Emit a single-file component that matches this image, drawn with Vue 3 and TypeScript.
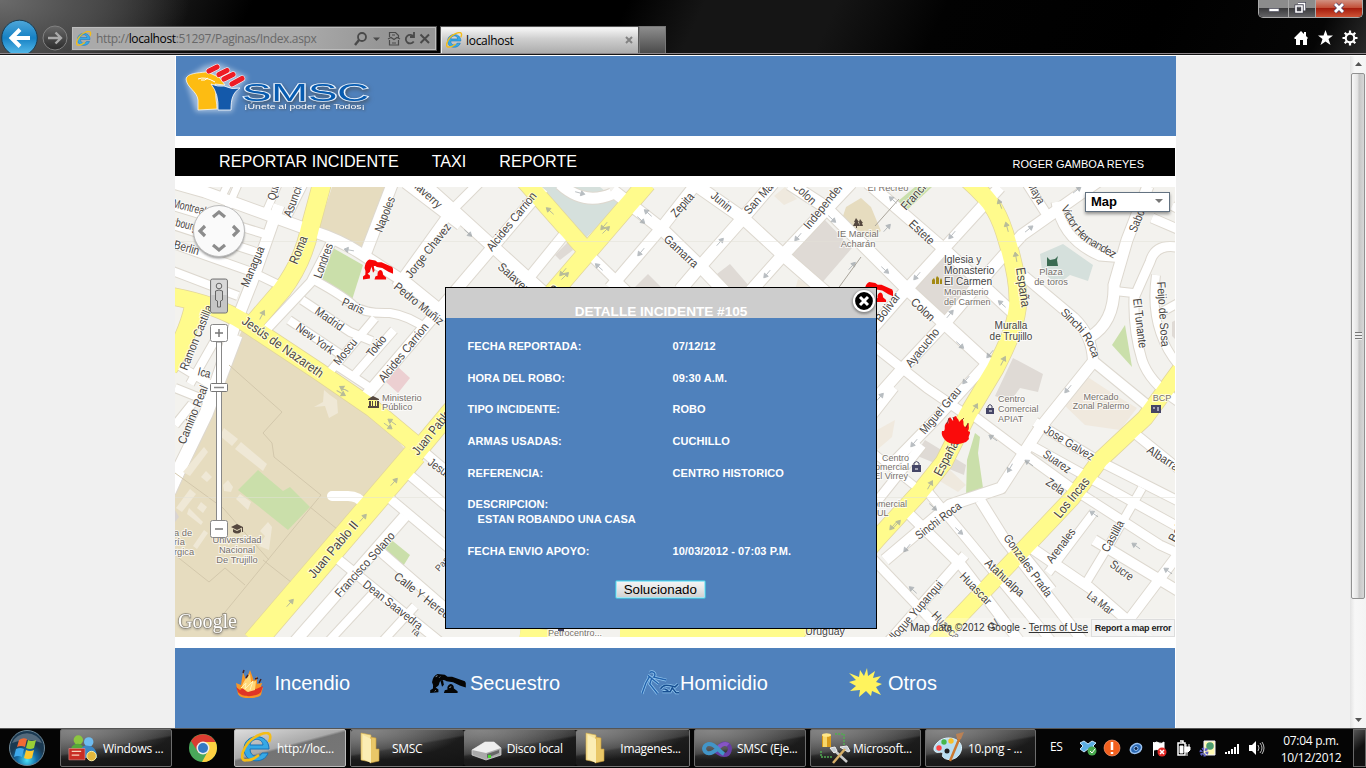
<script setup lang="ts">
type Road = { d: string; w: number }
type Label = { t: string; x: number; y: number; r: number; len?: number; s?: number }
type Place = { t: string; x: number; y: number; s?: number; a?: 'start' | 'middle' | 'end'; c?: string }
type Area = { p: string; c: string }

const areas: Area[] = [
  { p: '332,187 386,187 364,250 318,230', c: '#e6dcbf' },
  { p: '244,326 300,362 363,403 406,450 330,540 250,637 175,637 175,482 208,425 222,372', c: '#e6dcbf' },
  { p: '333,248 363,265 352,300 322,280', c: '#cadfaa' },
  { p: '398,367 410,378 398,393 386,382', c: '#eccfd1' },
  { p: '543,187 543,196 583,241 620,203 600,187', c: '#d5e0dc' },
  { p: '568,242 573,250 560,260 555,255', c: '#dfdad5' },
  { p: '632,290 648,274 664,290', c: '#dfdad5' },
  { p: '717,274 730,264 750,287 725,290', c: '#dfdad5' },
  { p: '822,217 852,248 820,285 792,255', c: '#dfdad5' },
  { p: '861,198 871,207 881,231 869,238 842,219 846,207', c: '#e6dcbf' },
  { p: '785,187 797,199 784,205 774,196', c: '#efe9de' },
  { p: '798,279 812,287 795,290', c: '#efe9de' },
  { p: '915,187 932,187 906,211 897,202', c: '#cadfaa' },
  { p: '943,256 973,289 942,318 913,290', c: '#dfdad5' },
  { p: '1063,244 1093,265 1088,281 1070,275 1057,285 1042,271 1040,254', c: '#d5e0dc' },
  { p: '1125,325 1132,367 1112,345', c: '#cadfaa' },
  { p: '1013,358 1043,374 1038,392 1020,388 1010,402 995,396', c: '#dfdad5' },
  { p: '975,433 980,437 978,453 983,488 966,496 967,460', c: '#cadfaa' },
  { p: '925,440 966,465 964,475 915,455', c: '#dfdad5' },
  { p: '950,470 966,485 958,492 938,480', c: '#efe9de' },
  { p: '1080,372 1115,395 1137,408 1120,430 1085,425 1062,403', c: '#f0e9de' },
  { p: '877,430 895,420 892,437 877,450', c: '#f0e9de' },
  { p: '1172,322 1176,320 1176,340 1172,336', c: '#dfdad5' },
  { p: '175,510 179,517 175,522', c: '#d9d4d2' },
  { p: '383,537 389,538 410,555 402,568 382,553', c: '#cadfaa' },
]

const campus: Area[] = [
  { p: '258,470 283,491 290,487 310,507 288,530 238,490', c: '#cadfaa' },
  { p: '224,428 238,439 232,446 220,436', c: '#efe8d6' },
  { p: '241,442 267,464 263,471 235,449', c: '#efe8d6' },
  { p: '204,447 208,452 190,476 183,472', c: '#efe8d6' },
  { p: '206,471 212,477 207,482 201,477', c: '#efe8d6' },
  { p: '190,489 196,494 182,512 176,508', c: '#efe8d6' },
  { p: '201,502 207,507 203,513 197,508', c: '#efe8d6' },
  { p: '189,508 203,522 201,525 187,514', c: '#efe8d6' },
  { p: '228,480 233,487 231,492 224,491 223,485', c: '#efe8d6' },
  { p: '240,494 251,502 248,510 236,499', c: '#efe8d6' },
  { p: '268,522 272,527 269,550 259,546 265,536 260,531', c: '#efe8d6' },
  { p: '204,530 208,533 197,549 193,546', c: '#efe8d6' },
  { p: '324,390 330,395 337,400 338,413 329,418 325,406 314,407 323,402', c: '#efe8d6' },
]

const major: Road[] = [
  { d: 'M323 180 L310 228 Q303 262 282 290 L252 325', w: 18 },
  { d: 'M170 296 Q215 304 244 322 L318 371 L372 408 L414 443', w: 17 },
  { d: 'M194 308 Q188 335 168 368', w: 19 },
  { d: 'M254 642 L415 454', w: 23 },
  { d: 'M415 454 L450 412 L647 183', w: 18 },
  { d: 'M524 180 L583 247', w: 17 },
  { d: 'M968 180 C994 203 1000 215 1008 244 C1025 300 1020 320 995 369 L968 414 L944 462 L920 492 L877 539 L790 640', w: 17 },
  { d: 'M1180 370 L1145 418 L1100 460 L1072 498 L1020 553 L935 642', w: 16 },
  { d: 'M520 634 L550 638 M620 633 L800 634', w: 15 },
]

const minor: Road[] = [
  { d: 'M170 182 L205 192 L315 232 Q340 240 360 253 L408 284 L455 322', w: 11 },
  { d: 'M170 205 L268 235', w: 8 },
  { d: 'M170 224 L262 254', w: 8 },
  { d: 'M170 243 L252 272 L281 286', w: 8 },
  { d: 'M170 270 L238 296', w: 8 },
  { d: 'M279 205 L252 282 L235 325 L206 412 L170 492', w: 11 },
  { d: 'M236 335 L206 414 L168 492', w: 13 },
  { d: 'M226 212 L240 180 M266 212 L280 180 M288 216 L306 180 M220 200 L230 180', w: 7 },
  { d: 'M393 182 L365 255', w: 11 },
  { d: 'M480 182 L450 212 L396 287', w: 9 },
  { d: 'M405 184 L460 226', w: 8 },
  { d: 'M331 243 L311 282 L262 334', w: 9 },
  { d: 'M316 281 Q345 297 354 306 Q366 314 390 313 Q410 316 428 330 M302 300 L350 332 L372 341 M289 320 L340 354', w: 8 },
  { d: 'M375 318 L328 374 M394 330 L352 378 M334 364 L375 391', w: 8 },
  { d: 'M543 188 L365 397', w: 11 },
  { d: 'M425 185 L455 212 L545 294', w: 12 },
  { d: 'M563 236 L515 295', w: 10 },
  { d: 'M560 184 Q584 206 612 194', w: 11 },
  { d: 'M612 190 L663 230 L700 266 L725 292', w: 12 },
  { d: 'M696 184 L663 226 L610 288', w: 11 },
  { d: 'M585 250 L630 294', w: 9 },
  { d: 'M693 183 L743 218 L783 255 L830 296', w: 12 },
  { d: 'M773 183 L743 218 L697 270 L680 290', w: 12 },
  { d: 'M851 183 L783 255 L750 292', w: 12 },
  { d: 'M790 184 L824 206 L907 289 L994 369', w: 12 },
  { d: 'M868 183 L943 248 L1012 312', w: 11 },
  { d: 'M1000 187 L907 289 L866 336', w: 11 },
  { d: 'M1100 180 L1022 235 Q990 270 947 321 L903 368 L870 405', w: 11 },
  { d: 'M870 343 L927 388 L962 412', w: 9 },
  { d: 'M990 360 L935 420 L890 466', w: 10 },
  { d: 'M1026 182 L1047 215 M1056 202 Q1062 240 1100 256 L1125 258', w: 9 },
  { d: 'M1148 186 L1127 240 L1114 285 Q1115 322 1090 337', w: 11 },
  { d: 'M1152 218 L1182 231 M1176 247 Q1155 244 1150 262 L1134 298 Q1133 330 1142 360 Q1150 384 1182 404', w: 9 },
  { d: 'M1115 291 L1133 293 M1172 206 L1182 211 M1156 275 Q1148 330 1180 367 M1160 313 L1180 302', w: 8 },
  { d: 'M1024 276 L1074 318 Q1092 335 1093 361 L1148 406', w: 10 },
  { d: 'M1093 362 L1040 428 L1001 488 L950 505 L885 560', w: 11 },
  { d: 'M966 410 L1023 453 L1070 487 L1160 545 L1182 555', w: 9 },
  { d: 'M1035 422 L1097 460 L1182 503 M1030 445 L1180 528', w: 9 },
  { d: 'M1128 428 L1180 470', w: 9 },
  { d: 'M980 500 L1005 540 L1082 640', w: 10 },
  { d: 'M1142 488 L1112 540 L1083 588 M1094 512 L1048 573', w: 8 },
  { d: 'M1030 547 L1090 588 L1150 640 M1094 540 L1180 592 M1180 552 L1125 625', w: 10 },
  { d: 'M923 486 L972 545 L1052 642', w: 9 },
  { d: 'M903 508 L962 566 L1020 642', w: 10 },
  { d: 'M872 558 L952 642', w: 9 },
  { d: 'M965 555 L888 642 M878 500 L922 445 M1052 590 L1020 550', w: 9 },
  { d: 'M405 516 L292 645', w: 11 },
  { d: 'M334 556 L440 642 M374 546 L450 612', w: 9 },
  { d: 'M388 497 L450 549 M406 472 L450 509 M424 452 L450 474', w: 9 },
  { d: 'M378 588 L328 642 M415 606 L382 642', w: 8 },
  { d: 'M870 450 L922 492 M895 388 L870 420', w: 7 },
  { d: 'M175 425 L192 404 M170 360 L216 388 M222 328 L190 384 M175 388 L210 402', w: 8 },
]

const streets: Label[] = [
  { t: 'Montreal', x: 172, y: 207, r: 14, len: 34 }, { t: 'bourg', x: 175, y: 226, r: 14, len: 22 },
  { t: 'Berlin', x: 173, y: 248, r: 16, len: 26 }, { t: 'Quito', x: 275, y: 201, r: -74, len: 23 },
  { t: 'Asuncion', x: 291, y: 218, r: -70, len: 43 }, { t: 'Managua', x: 248, y: 288, r: -67, len: 43 },
  { t: 'Roma', x: 297, y: 265, r: -68, len: 29, s: 13 }, { t: 'Londres', x: 321, y: 279, r: -70, len: 36 },
  { t: 'Napoles', x: 382, y: 233, r: -69, len: 37 }, { t: 'Jorge Chavez', x: 411, y: 279, r: -52, len: 66 },
  { t: 'Echaverry', x: 402, y: 177, r: 42, len: 48 }, { t: 'Pedro Muñiz', x: 393, y: 288, r: 39, len: 60 },
  { t: 'Paris', x: 341, y: 305, r: 24, len: 23 }, { t: 'Madrid', x: 314, y: 313, r: 35, len: 32 },
  { t: 'New York', x: 295, y: 329, r: 36, len: 44 }, { t: 'Moscu', x: 339, y: 366, r: -51, len: 30 },
  { t: 'Tokio', x: 372, y: 358, r: -51, len: 24 }, { t: 'Alcides Carrion', x: 384, y: 383, r: -51, len: 72 },
  { t: 'Jesús de Nazareth', x: 241, y: 323, r: 35, len: 96, s: 13 }, { t: 'Ica', x: 197, y: 375, r: 14, len: 13 },
  { t: 'Ramon Castilla', x: 187, y: 371, r: -68, len: 69 }, { t: 'Camino Real', x: 185, y: 445, r: -68, len: 62 },
  { t: 'Juan Pablo II', x: 314, y: 579, r: -50, len: 70, s: 13 }, { t: 'Juan Pablo', x: 418, y: 456, r: -51, len: 54, s: 13 },
  { t: 'Jesus', x: 427, y: 464, r: 36, len: 26 }, { t: 'Francisco Solano', x: 340, y: 598, r: -48, len: 83 },
  { t: 'Calle Y Heredia', x: 393, y: 578, r: 38, len: 76 }, { t: 'Dean Saavedra', x: 362, y: 586, r: 38, len: 72 },
  { t: 'Pas', x: 439, y: 572, r: -48, s: 9 }, { t: 'ra', x: 411, y: 632, r: 38, s: 9 },
  { t: 'Alcides Carrion', x: 492, y: 252, r: -51, len: 72 }, { t: 'Salaverry', x: 497, y: 268, r: 42, len: 46 },
  { t: 'Zepita', x: 676, y: 218, r: -48, len: 28 }, { t: 'Gamarra', x: 663, y: 240, r: 43, len: 42 },
  { t: 'Mansiche', x: 524, y: 332, r: -52, len: 56 }, { t: 'Junin', x: 710, y: 197, r: 40, len: 24 },
  { t: 'San Martin', x: 749, y: 215, r: -48, len: 52 }, { t: 'Colon', x: 792, y: 187, r: 43, len: 27 },
  { t: 'Independencia', x: 809, y: 230, r: -51, len: 71 }, { t: 'Francisco', x: 906, y: 211, r: -48, len: 48 },
  { t: 'Estete', x: 908, y: 225, r: 43, len: 30 }, { t: 'Bolivar', x: 881, y: 323, r: -53, len: 33 },
  { t: 'Colon', x: 910, y: 303, r: 43, len: 28 }, { t: 'Ayacucho', x: 911, y: 368, r: -51, len: 46 },
  { t: 'Miguel Grau', x: 925, y: 435, r: -50, len: 57 }, { t: 'España', x: 1016, y: 268, r: 82, len: 40, s: 13 },
  { t: 'Maya', x: 1027, y: 184, r: 62, len: 24 }, { t: 'Saboga', x: 1136, y: 233, r: -67, len: 34 },
  { t: 'El Tunante', x: 1133, y: 299, r: 83, len: 50 }, { t: 'Feijo de Sosa', x: 1157, y: 282, r: 86, len: 65 },
  { t: 'España', x: 941, y: 477, r: -62, len: 38, s: 13 }, { t: 'Sinchi Roca', x: 919, y: 540, r: -37, len: 54 },
  { t: 'Jose Galvez', x: 1043, y: 432, r: 31, len: 56 }, { t: 'Suarez', x: 1042, y: 456, r: 35, len: 31 },
  { t: 'Zela', x: 1045, y: 484, r: 34, len: 20 }, { t: 'Los Incas', x: 1060, y: 519, r: -51, len: 48, s: 13 },
  { t: 'Albarracin', x: 1146, y: 452, r: 33, len: 50 }, { t: 'Gonzales Prada', x: 1003, y: 538, r: 54, len: 74 },
  { t: 'Arenales', x: 1052, y: 564, r: -53, len: 40 }, { t: 'Castilla', x: 1108, y: 553, r: -61, len: 34 },
  { t: 'Sucre', x: 1109, y: 566, r: 36, len: 26 }, { t: 'La Mar', x: 1086, y: 597, r: 37, len: 30 },
  { t: 'Atahualpa', x: 984, y: 564, r: 43, len: 49 }, { t: 'Huascar', x: 959, y: 577, r: 46, len: 40 },
  { t: 'lloque Yupanqui', x: 895, y: 641, r: -49, len: 74 }, { t: 'Huascar', x: 931, y: 616, r: 46, len: 38 },
  { t: 'Bal', x: 1175, y: 543, r: -62 }, { t: 'W', x: 993, y: 632, r: -48 },
]

const places: Place[] = [
  { t: 'Ministerio', x: 382, y: 401 }, { t: 'Público', x: 382, y: 410 },
  { t: 'Universidad', x: 237, y: 543, a: 'middle' }, { t: 'Nacional', x: 237, y: 553, a: 'middle' },
  { t: 'De Trujillo', x: 237, y: 563, a: 'middle' }, { t: 'a de', x: 174, y: 536 }, { t: 'ría', x: 174, y: 545 },
  { t: 'rgica', x: 174, y: 555 }, { t: 'El Recreo', x: 888, y: 191, a: 'middle' },
  { t: 'IE Marcial', x: 858, y: 237, a: 'middle' }, { t: 'Acharán', x: 858, y: 247, a: 'middle' },
  { t: 'Iglesia y', x: 944, y: 263, s: 10.2, c: '#444' }, { t: 'Monasterio', x: 944, y: 274, s: 10.2, c: '#444' },
  { t: 'El Carmen', x: 944, y: 285, s: 10.2, c: '#444' }, { t: 'Monasterio', x: 944, y: 295, s: 9 },
  { t: 'del Carmen', x: 944, y: 305, s: 9 }, { t: 'Muralla', x: 1011, y: 329, s: 10, a: 'middle', c: '#444' },
  { t: 'de Trujillo', x: 1011, y: 340, s: 10, a: 'middle', c: '#444' }, { t: 'Plaza', x: 1051, y: 275, a: 'middle' },
  { t: 'de toros', x: 1051, y: 285, a: 'middle' }, { t: 'Centro', x: 998, y: 402, s: 9 },
  { t: 'Comercial', x: 998, y: 412, s: 9 }, { t: 'APIAT', x: 998, y: 422, s: 9 }, { t: 'Mercado', x: 1101, y: 400, a: 'middle', s: 9 },
  { t: 'Zonal Palermo', x: 1101, y: 409, a: 'middle', s: 8.7 }, { t: 'BCP', x: 1162, y: 401, a: 'middle', s: 9 },
  { t: 'Centro', x: 909, y: 461, a: 'end', s: 9 }, { t: 'Comercial', x: 909, y: 470, a: 'end', s: 9 },
  { t: 'El Virrey', x: 908, y: 479, a: 'end', s: 9 }, { t: 'Comercial', x: 907, y: 507, a: 'end', s: 9 },
  { t: 'UL', x: 877, y: 516, s: 9 }, { t: 'Uruguay', x: 825, y: 635, s: 10.5, a: 'middle', c: '#444' },
  { t: 'Petrocentro...', x: 575, y: 636, a: 'middle', s: 9 },
]

// x, y, heading
const arrows: number[][] = [
  [349, 250, 190], [262, 315, -62], [344, 389, 210], [341, 393, 30], [290, 603, -48], [363, 518, -48], [394, 482, -48],
  [392, 422, 215], [388, 426, 35], [468, 233, 42], [550, 211, 222], [580, 193, 15], [604, 226, 130], [606, 230, -45],
  [563, 272, 130], [565, 276, -45], [641, 220, 42], [648, 213, 222], [641, 252, 130], [599, 267, 222], [720, 242, -48],
  [798, 237, 130], [767, 274, 130], [832, 219, 42], [885, 270, 42], [917, 276, 130], [893, 200, 222], [887, 228, -48],
  [852, 266, -48], [952, 235, 130], [1000, 204, -110], [1007, 227, -105], [1016, 257, -100], [1029, 229, -38],
  [1002, 304, 222], [950, 314, -50], [990, 354, 130], [960, 345, 42], [1003, 361, -62], [966, 380, 130], [880, 397, -48],
  [1068, 389, 130], [975, 408, -60], [914, 443, 130], [993, 438, 215], [1029, 463, 215], [1010, 468, 120], [930, 485, -60],
  [933, 507, 42], [959, 531, 42], [907, 548, 130], [893, 526, 130], [897, 524, -48], [1094, 514, 215], [1136, 546, 215],
  [1168, 571, 215], [913, 590, 222], [1077, 190, -38],
]

const details: [string, string][] = [
  ['FECHA REPORTADA:', '07/12/12'],
  ['HORA DEL ROBO:', '09:30 A.M.'],
  ['TIPO INCIDENTE:', 'ROBO'],
  ['ARMAS USADAS:', 'CUCHILLO'],
  ['REFERENCIA:', 'CENTRO HISTORICO'],
]
const menu: string[] = ['REPORTAR INCIDENTE', 'TAXI', 'REPORTE']
</script>

<template>
  <div class="desktop">
    <svg class="defs" width="0" height="0">
      <defs>
        <g id="ie">
          <path d="M28 17H9c0 9 10 9 12 4h6c-3 11-24 11-24-4 0-16 25-17 25 0zM9 13h13c-1-8-12-7-13 0z" fill="#36a9e6" stroke="#1673b9" stroke-width="1" />
          <path d="M6 28C-4 31 2 10 18 3c11-5 13 0 10 7M5 28c5 1 9-2 13-5" fill="none" stroke="#f4bd18" stroke-width="2.6" />
        </g>
        <g id="folder">
          <path d="M3 1l10 2v27L3 28z" fill="#f7e39b" stroke="#d3ad4a" stroke-width=".6" />
          <path d="M13 5l5 1v11h3v12l-9 2z" fill="#e9c768" stroke="#c89a37" stroke-width=".6" />
          <path d="M5 3l8 4v24l-8-4z" fill="#fbedb4" />
        </g>
        <g id="gun">
          <path d="M0 22v-3l3-2q1-4-1-7Q3 3 8 1l8 1 3 2h5l14 5 1 2v5l-6-2-8-4-7-1-2-1q-5-1-6 3 0 3-4 5l3 2v3z" />
          <path d="M11 8h3l1 5-2 2zM15 22l1-3 3-1q-1-4 3-6 4 0 4 5l4 3v2z" />
        </g>
      </defs>
    </svg>

    <header class="browser">
      <div class="nav-buttons">
        <svg width="70" height="53" viewBox="0 0 70 53">
          <defs>
            <linearGradient id="bk" x2="0" y2="1"><stop offset="0" stop-color="#4fa7d9" /><stop offset=".5" stop-color="#1681c4" /><stop offset="1" stop-color="#5cc0ee" /></linearGradient>
            <linearGradient id="fw" x2="0" y2="1"><stop offset="0" stop-color="#686868" /><stop offset="1" stop-color="#2b2b2b" /></linearGradient>
          </defs>
          <circle cx="19.500" cy="38" r="17.800" fill="url(#bk)" stroke="#1c3c50" />
          <path d="M30 38H12M20 29.500L11.500 38l8.500 8.500" fill="none" stroke="#fff" stroke-width="4" />
          <circle cx="55" cy="38" r="12" fill="url(#fw)" stroke="#808080" />
          <path d="M48 38h12M55.500 32.500L61 38l-5.500 5.500" fill="none" stroke="#a9a9a9" stroke-width="2.400" />
        </svg>
      </div>
      <div class="address">
        <svg width="16" height="16" viewBox="0 0 32 32"><use href="#ie" /></svg>
        <span class="url">http://<b>localhost</b>:51297/Paginas/Index.aspx</span>
        <svg class="tools" width="80" height="16" viewBox="0 0 80 16" fill="none" stroke="#4a4a4a" stroke-width="1.800">
          <circle cx="9" cy="6" r="4" /><path d="M6 9l-4 5" stroke-width="2.400" />
          <path d="M20 6.500h7L23.500 10z" fill="#4a4a4a" stroke="none" />
          <path d="M36.500 6V1.500h6l3 3V7M36.500 9v5h9V9M35 8l3-1.500 3 2 3-2 3 1.500M39 4h3M39 12h4" stroke-width="1.200" />
          <path d="M60.500 5.500a4.300 4.300 0 1 0 .2 5M57 6h4V1" />
          <path d="M67.500 3.500l8.500 8.500m0-8.500l-8.500 8.500" stroke-width="2" />
        </svg>
      </div>
      <div class="tab">
        <svg width="17" height="17" viewBox="0 0 32 32"><use href="#ie" /></svg>
        <span>localhost</span>
        <svg class="tab-x" width="8" height="8" viewBox="0 0 8 8"><path d="M1 1l6 6m0-6L1 7" stroke="#828282" stroke-width="2" /></svg>
      </div>
      <div class="new-tab"></div>
      <div class="window-side">
        <div class="window-buttons">
          <i><svg width="29" height="17"><path d="M10 8.500h10v3H10z" fill="#fff" stroke="#556" stroke-width=".7" /></svg></i>
          <i><svg width="26" height="17"><path d="M9 3.500h6.500v7M7 6h6v6H7z" fill="none" stroke="#445" stroke-width="3" /><path d="M9 3.500h6.500v7M7 6h6v6H7z" fill="none" stroke="#fff" stroke-width="1.600" /></svg></i>
          <i class="close"><svg width="46" height="17"><path d="M19 4l8 8m0-8l-8 8" stroke="#546" stroke-width="4.400" /><path d="M19 4l8 8m0-8l-8 8" stroke="#fff" stroke-width="2.800" /></svg></i>
        </div>
        <svg class="command-icons" width="66" height="16" viewBox="0 0 66 16" fill="#fff">
          <path d="M1 8L8 1l3 3V2h2v4l2 2-1 1v6h-4v-5H7v5H3V9H2z" />
          <path d="M32.500 0l2 5.500h5.500L35.500 9l2 6-5-3.500-5 3.500 2-6L25 5.500h5.500z" />
          <circle cx="57" cy="8" r="4.300" fill="none" stroke="#fff" stroke-width="2.200" />
          <path d="M57 .5V3m0 10v2.500M49.500 8H52m10 0h2.500M51.700 2.700l1.800 1.800m7 7l1.800 1.800m0-10.600l-1.800 1.800m-7 7l-1.800 1.800" stroke="#fff" stroke-width="2.200" />
        </svg>
      </div>
    </header>

    <div class="viewport">
      <div class="gutter"></div>
      <main class="page">
        <div class="banner">
          <svg width="210" height="70" viewBox="176 56 210 70">
            <defs><filter id="glow" x="-20%" y="-20%" width="140%" height="150%"><feGaussianBlur stdDeviation="2.500" /></filter></defs>
            <path d="M185 79l19-13 14-3 30 14-8 10-8 25h-36z" fill="#fff" opacity=".45" filter="url(#glow)" />
            <path d="M198 110v-10c-1-9-11-12-12-21 1-6 12-6 20-7 5 1 7 3 13 5l6 8-10-1 1 8c-1 6 1 10 1 17z" fill="#fdbc12" stroke="#fff" stroke-width=".7" />
            <path d="M211 84q7 3 13 2 8 4 16 2c-7 5-9 10-9 22h-13q1-16-7-26z" fill="#1459aa" stroke="#fff" stroke-width=".8" />
            <path d="M198 79q7-3 17 3M208 78q-3 3-7 2" fill="none" stroke="#fff" stroke-width="1" />
            <path d="M209 71l8-4M219 74.500l8-4M224 79l9-4.500M232 84l10-5.500" fill="none" stroke="#fff" stroke-linecap="round" stroke-width="6.200" />
            <path d="M209 71l8-4M219 74.500l8-4M224 79l9-4.500M232 84l10-5.500" fill="none" stroke="#ee1c25" stroke-linecap="round" stroke-width="5.200" />
            <text x="242" y="100.500" class="logo-text" textLength="127" lengthAdjust="spacingAndGlyphs">SMSC</text>
            <text x="244" y="108.500" class="logo-slogan" textLength="121" lengthAdjust="spacingAndGlyphs">¡Únete al poder de Todos¡</text>
          </svg>
        </div>
        <nav class="menu">
          <a v-for="m in menu" :key="m">{{ m }}</a>
          <span class="user">ROGER GAMBOA REYES</span>
        </nav>

        <section class="map">
          <svg class="canvas" width="1000" height="450" viewBox="175 187 1000 450">
            <rect x="175" y="187" width="1000" height="450" fill="#f3f2ee" />
            <polygon v-for="(a, i) in areas" :key="'a' + i" :points="a.p" :fill="a.c" />
            <g fill="none" stroke="#ddd8cf">
              <path v-for="(r, i) in minor" :key="'c' + i" :d="r.d" :stroke-width="r.w + 2" />
            </g>
            <g fill="none" stroke="#e2d69c">
              <path v-for="(r, i) in major" :key="'d' + i" :d="r.d" :stroke-width="r.w + 1.5" />
            </g>
            <g fill="none" stroke="#fff" stroke-linejoin="round">
              <path v-for="(r, i) in minor" :key="'m' + i" :d="r.d" :stroke-width="r.w" />
              <path d="M332 496h16q11 0 16 9" stroke-width="10" stroke-linecap="round" />
            </g>
            <polygon v-for="(a, i) in campus" :key="'u' + i" :points="a.p" :fill="a.c" />
            <path d="M229 365l53 47-19 21 9 10 2 14 47 38-100 122M310 507l27 22M263 560l28 22M175 473l48 35 46 52M175 555l34 27 16-14 20 17" fill="none" stroke="#d3c8ac" />
            <g fill="none" stroke="#fffb8c" stroke-linejoin="round">
              <path v-for="(r, i) in major" :key="'y' + i" :d="r.d" :stroke-width="r.w" />
            </g>
            <path v-for="(a, i) in arrows" :key="'r' + i" d="M-5 0H4M1-2.500L5 0 1 2.500z" :transform="`translate(${a[0]} ${a[1]}) rotate(${a[2]})`" class="arrow" />
            <path d="M875 226l24-27m-62 91l24-33" stroke="#aaa59b" fill="none" />
            <path d="M175 241.500H1175M175 497.500H1175" stroke="#e3e1d8" opacity=".5" />
            <text
              v-for="(l, i) in streets" :key="'l' + i" class="street" :font-size="l.s ?? 12"
              :textLength="l.len" lengthAdjust="spacingAndGlyphs"
              :transform="`translate(${l.x} ${l.y}) rotate(${l.r})`"
            >{{ l.t }}</text>
            <path id="victor" d="M1061 207Q1073 236 1092 246L1118 261" fill="none" />
            <path id="sinchi" d="M1060 313L1078 331Q1088 341 1093 360L1095 367" fill="none" />
            <text class="street" font-size="11.500"><textPath href="#victor" textLength="76">Victor Hernandez</textPath></text>
            <text class="street" font-size="11.500"><textPath href="#sinchi" textLength="57">Sinchi Roca</textPath></text>
            <text v-for="(p, i) in places" :key="'p' + i" class="place" :x="p.x" :y="p.y" :font-size="p.s ?? 9.3" :text-anchor="p.a ?? 'start'" :fill="p.c ?? '#77716b'">{{ p.t }}</text>

            <g fill="#55483f"><path d="M368 399l5-3 6 3v1h-11zM369 401h2v5h-2zm3 0h1v5h-1zm3 0h1v5h-1zm2 0h2v5h-2zM368 406h11v2h-11z" /><path d="M231 527l6-3 6 3-6 3zM233 529l4 2 4-2v3q-4 3-8 0zM242 527h1v5h-1z" /><path d="M856 218l3 4h-1l2 4h-3v2h-1v-2h-3l2-4h-1zM860 219l3 4-1 0 1 3h-3l-1-4z" /></g>
            <path d="M932 284v-4l2-2 1 2v4zm4 0v-6l1-2 2 2v6zm4 0v-4l1-2 1 2v4z" fill="#a48a14" />
            <path d="M1047 257l3 3 5-1 3-3-1 4 1 6h-11zM1049 262l2 2" fill="#3a6b52" />
            <g fill="#454566"><path d="M986 408h8v6h-8zM912 465h9v7h-9zM1151 405h10v8h-10zM558 628h6v3h-6z" /><path d="M988 408v-2q2-3 4 0v2M914 465v-2q2.500-3 5 0v2" fill="none" stroke="#454566" /></g>
            <path d="M989 411h3M915 469h3M1153 408h2m2 0h2m-2 2h2" stroke="#fff" />

            <use href="#gun" transform="translate(363 258.500) scale(.77 .95)" fill="#f80505" />
            <use href="#gun" transform="translate(863 281) scale(.77 .95)" fill="#f80505" />
            <path d="M942 431l2 0c2-3-1-5 3-9l1 2c1-3-1-3 2-7l3 4c1-2-1-4 3-5 1 3 3 3 3 6l3-3c3 3 0 5 3 8 2-1 2-3 4-4-1 4 1 4-1 8l2 1c0 3-2 4-1 7l-3 3c-7 3-17 3-21-2-2-3-4-5-3-9z" fill="#fa0b0b" />
            <path d="M947 424l2-6m4-1l1 3m8 0l2-2m2 10l2-5" stroke="#722" stroke-width=".9" />
            <text x="178" y="627.500" class="google" textLength="59" lengthAdjust="spacingAndGlyphs">Google</text>
          </svg>

          <svg class="controls" width="60" height="350" viewBox="190 200 60 350">
            <defs><filter id="soft"><feGaussianBlur stdDeviation="1.200" /></filter></defs>
            <circle cx="219" cy="233" r="25.500" fill="#555" opacity=".6" filter="url(#soft)" />
            <circle cx="219" cy="231" r="25.500" fill="#fafafa" stroke="#bbb" />
            <path d="M213 217l6-5 6 5M213 245l6 5 6-5M205 226l-5 5 5 5M233 226l5 5-5 5" fill="none" stroke="#8c8c8c" stroke-width="3.200" />
            <rect x="210.500" y="279" width="17" height="34" rx="2" fill="#c6c6c6" stroke="#777" />
            <rect x="211.500" y="280" width="15" height="15" fill="#d9d9d9" />
            <path d="M215.500 291q3.500-2 7 0v9l-2 1v6h-3v-6l-2-1z" fill="#ccc" stroke="#666" /><circle cx="219" cy="286" r="2.800" fill="#ddd" stroke="#666" />
            <path d="M216.500 342v180h5V342z" fill="#fff" stroke="#888" />
            <rect x="210.500" y="324.500" width="17" height="17" rx="2" fill="#fff" stroke="#888" />
            <path d="M215 333h8m-4-4v8" stroke="#777" stroke-width="1.500" />
            <rect x="210.500" y="383.500" width="17" height="8" rx="1" fill="#fff" stroke="#777" /><path d="M214 387.500h10" stroke="#888" stroke-width="1.500" />
            <rect x="210.500" y="520.500" width="17" height="17" rx="2" fill="#fff" stroke="#888" /><path d="M215 529h8" stroke="#777" stroke-width="1.500" />
          </svg>
          <div class="map-type"><b>Map</b><svg width="8" height="5"><path d="M0 0h8L4 4z" fill="#777" /></svg></div>
          <div class="attribution"><span>Map data ©2012 Google - <u>Terms of Use</u></span><b>Report a map error</b></div>

          <div class="dialog">
            <div class="dialog-title">DETALLE INCIDENTE #105</div>
            <div class="dialog-body">
              <div v-for="d in details" :key="d[0]" class="row"><span>{{ d[0] }}</span><span>{{ d[1] }}</span></div>
              <div class="description"><span>DESCRIPCION:</span><span class="indent">ESTAN ROBANDO UNA CASA</span></div>
              <div class="row"><span>FECHA ENVIO APOYO:</span><span>10/03/2012 - 07:03 P.M.</span></div>
              <button>Solucionado</button>
            </div>
            <svg class="dialog-close" width="30" height="30" viewBox="0 0 30 30">
              <circle cx="15" cy="16" r="12" fill="#444" opacity=".5" filter="url(#soft)" />
              <circle cx="15" cy="15" r="10" fill="#000" stroke="#fff" stroke-width="2.200" /><path d="M11 11l8 8m0-8l-8 8" stroke="#fff" stroke-width="3" />
            </svg>
          </div>
        </section>

        <footer class="legend">
          <div class="item fire">
            <svg width="30" height="30" viewBox="0 0 30 30">
              <path d="M1 15l5 2 2-13 3 8 4-10 4 11 3-5v8l5-1-2 7 3-3-2 8c-4 4-20 5-23-1z" fill="#f79525" /><path d="M1 19l4 3 3-2 4 4 5-4 4 1 7-3-2 6c-4 5-19 6-23 0z" fill="#df3526" />
              <path d="M7 20c0-4 3-9 8-14l1 8 5-1-1 9-7 2z" fill="#ffd778" /><path d="M6 20l5-5-1 6 8-8-3 9" stroke="#fff1b4" fill="none" /><path d="M8 5l1-3m2 8l2-3m7 4l3-1m1 5l2-4" stroke="#422" stroke-width="1.500" />
            </svg><span>Incendio</span>
          </div>
          <div class="item gun"><svg width="36" height="21" viewBox="0 0 39 23" fill="#050505"><use href="#gun" /><path d="M6 4l2-1m2 2l1-1m10 12l2-1m-18 5l1-1" stroke="#9ab" /></svg><span>Secuestro</span></div>
          <div class="item crime">
            <svg width="39" height="26" viewBox="0 0 40 26" fill="none"><g id="figures"><path d="M9 2c4-2 7 2 4 5l13 3M9 6L5 13 1 24M11 8l-2 6 8 10M7 5l11 9" stroke="#93c8f0" stroke-width="3" /><path d="M9 2c4-2 7 2 4 5l13 3M9 6L5 13 1 24M11 8l-2 6 8 10M7 5l11 9" stroke="#2463ad" stroke-width="1.500" /><path d="M20 19c4-6 10-3 15-2l3-3M22 22h8l2-4 4 5h3M24 19l4 2" stroke="#93c8f0" stroke-width="3" /><path d="M20 19c4-6 10-3 15-2l3-3M22 22h8l2-4 4 5h3M24 19l4 2" stroke="#174f92" stroke-width="1.600" /></g></svg><span>Homicidio</span>
          </div>
          <div class="item other"><svg width="34" height="30" viewBox="0 0 34 30"><path d="M19 0l1 8 7-5-2 7 8-2-5 6 6 2-6 3 5 8-9-4-1 5-5-5-7 6 1-7-10 1 6-5-7-4 7-2-7-7 10 4 1-7 4 6z" fill="#fff35d" /></svg><span>Otros</span></div>
        </footer>
      </main>
      <div class="right-gutter"></div>
      <div class="scrollbar"><svg width="16" height="17"><path d="M5 10l3.500-4 3.500 4z" fill="#555" /></svg><div class="thumb"><i></i></div><svg class="down" width="16" height="17"><path d="M5 7l3.500 4L12 7z" fill="#555" /></svg></div>
    </div>

    <div class="taskbar">
      <div class="start">
        <svg width="40" height="38" viewBox="0 0 40 38">
          <defs><radialGradient id="orb" cy=".85"><stop offset="0" stop-color="#4be0f7" /><stop offset=".55" stop-color="#146ba5" /><stop offset="1" stop-color="#1b3951" /></radialGradient></defs>
          <circle cx="20" cy="19" r="17.500" fill="url(#orb)" stroke="#6c8797" /><path d="M5 14a16 15 0 0 1 30 0q-15-6-30 0z" fill="#fff" opacity=".25" />
          <path d="M12 11q4-3 8-1l-2 8q-4-2-8 0z" fill="#f26a35" /><path d="M21 11q4 2 8 0l-2 8q-4 2-8 0z" fill="#9bcf35" /><path d="M9 20q4-2 8 0l-2 8q-4-2-8 0z" fill="#3ea9ec" /><path d="M19 21q4 2 8 0l-2 8q-4 2-8 0z" fill="#fcc72d" />
        </svg>
      </div>
      <div class="task msn">
        <svg width="34" height="31" viewBox="0 0 36 32"><circle cx="12" cy="7" r="5" fill="#8cc63f" /><path d="M3 22q1-12 9-11 6 0 7 11z" fill="#56a93a" /><circle cx="23" cy="9" r="5" fill="#6ebcf0" /><path d="M13 26q0-14 9-13 9 0 10 13z" fill="#3c86c4" /><path d="M2 16h17v12H2z" fill="#c92e24" stroke="#e99" stroke-width=".6" /><path d="M5 19h10M5 23h8" stroke="#f8d3ba" stroke-width="1.500" /><circle cx="26" cy="24" r="5" fill="#e3b83d" stroke="#fff0a6" /></svg><span>Windows ...</span>
      </div>
      <div class="chrome"><svg width="28" height="28" viewBox="0 0 28 28"><circle cx="14" cy="14" r="14" fill="#4aa85a" /><path d="M2 7a14 14 0 0 1 24 0l1 3H14L9 18z" fill="#db3c30" /><path d="M14 8h12.600A14 14 0 0 1 13 28l6-11z" fill="#fed142" /><circle cx="14" cy="14" r="6.500" fill="#eee" /><circle cx="14" cy="14" r="5" fill="#347ac4" /></svg></div>
      <div class="task active"><svg width="32" height="32" viewBox="0 0 32 32"><use href="#ie" /></svg><span class="page-title">http://loc...</span></div>
      <div class="group">
        <div class="task"><svg width="30" height="32" viewBox="-1 0 30 32"><use href="#folder" /></svg><span class="smsc">SMSC</span></div>
        <div class="task"><svg width="32" height="32" viewBox="0 0 32 32"><path d="M2 18l13-8h9l7 6v7l-15 5-14-5z" fill="#aaa" stroke="#ddd" stroke-width=".7" /><path d="M2 18l13-8h9l7 6-15 5z" fill="#eee" /><path d="M17 22l12-4v3l-12 5z" fill="#666" /><path d="M18 23h3v3h-3z" fill="#48db30" /></svg><span class="disk">Disco local</span></div>
        <div class="task"><svg width="30" height="32" viewBox="-1 0 30 32"><use href="#folder" /></svg><span class="imagenes">Imagenes...</span></div>
      </div>
      <div class="task vs"><svg width="32" height="32" viewBox="0 0 32 32" fill="none" stroke-width="4"><path d="M14 19c4-4 7-9 12-7 5 3 3 11-3 11-4 0-6-3-9-4" stroke="#663da4" /><path d="M19 14c-3 3-8 9-13 7C0 18 4 9 12 13c5 3 7 7 11 9" stroke="#4295c8" /><path d="M18 15c3-3 7-4 9-2" stroke="#8655c4" /></svg><span class="two">SMSC (Eje...</span></div>
      <div class="task sql"><svg width="34" height="34" viewBox="0 0 34 34"><path d="M5 4h9v12H5z" fill="#d99c1b" /><path d="M6 4h4v12H6z" fill="#f8d76a" /><ellipse cx="9.500" cy="4" rx="4.500" ry="1.800" fill="#ffe788" /><path d="M18 3h9v11M4 20v6h11" fill="none" stroke="#52ab52" stroke-width="1.500" stroke-dasharray="2 1" /><path d="M16 18l14 13" stroke="#ccc" stroke-width="2.500" /><path d="M13 17l5-1 2 4-3 2zM23 16l7-1 3 5-2 1z" fill="#c4ccd2" stroke="#eee" /><path d="M28 18L16 32" stroke="#d7b069" stroke-width="2.500" /></svg><span>Microsoft...</span></div>
      <div class="task paint"><svg width="34" height="34" viewBox="0 0 34 34"><path d="M5 12C14 2 33 8 29 20c-3 10-15 10-18 6-2-2 2-4-2-5-8 2-9-4-4-9z" fill="#b8def1" stroke="#e0f5ff" /><circle cx="7" cy="17" r="2.700" fill="#f44" /><circle cx="12" cy="11" r="2.700" fill="#45b64a" /><circle cx="19" cy="10" r="2.700" fill="#f7bf2b" /><circle cx="15" cy="20" r="2.500" fill="#202020" /><path d="M28 6L18 30" stroke="#cb7830" stroke-width="2.500" /><path d="M24 3l8-2-3 7h-4z" fill="#b98155" /></svg><span>10.png - ...</span></div>
      <div class="lang">ES</div>
      <svg class="tray" width="190" height="18" viewBox="1078 739 190 18">
        <path d="M1080 743l4-2 4 3 4-3 4 2-3 3 3 3-4 3-4-3-4 3-4-3 3-3z" fill="#5caee3" stroke="#c7e6fc" /><circle cx="1092" cy="751" r="4.500" fill="#47a84c" /><path d="M1090 751l2 2 3-4" fill="none" stroke="#fff" />
        <circle cx="1112" cy="748" r="8" fill="#f2601e" stroke="#ffa27d" stroke-width=".6" /><path d="M1112 742v8m0 2v2" stroke="#fff" stroke-width="2.500" />
        <ellipse cx="1136" cy="748.500" rx="6" ry="4.500" transform="rotate(-30 1136 748.500)" fill="#2968b3" stroke="#9ac1ef" stroke-width="1.500" /><circle cx="1136" cy="748.500" r="2" fill="#0a2448" stroke="#9ac1ef" />
        <path d="M1153.500 742v14M1154 743q3-2 5 0 3 1 5-1v8q-3 2-5 0-2-1-5 0z" fill="#fff" stroke="#fff" /><circle cx="1162" cy="752" r="4.500" fill="#e32926" /><path d="M1160 750l4 4m0-4l-4 4" stroke="#fff" stroke-width="1.500" />
        <path d="M1178 743h7v12h-7zM1180 741h3v2" fill="none" stroke="#fff" stroke-width="1.500" /><path d="M1180 746h3v7h-3zM1185 747h5v3l-2 2h-3zM1186 744v3m3-3v3m-2 5v4" fill="#fff" stroke="#fff" />
        <path d="M1204 741h11v14h-11z" fill="#fff9b2" stroke="#eef" /><circle cx="1210" cy="746" r="3.800" fill="#4c9c70" /><circle cx="1204" cy="752" r="3" fill="none" stroke="#6162c7" stroke-width="3" stroke-dasharray="2 1" />
        <path d="M1225 752h2v2h-2zm3-1h2v3h-2zm3-2h2v5h-2zm3-2h2v7h-2zm3-3h2v10h-2z" fill="#fff" /><path d="M1249 745h3l4-4v14l-4-4h-3z" fill="#fff" /><path d="M1258 745q2 3 0 6m2-8q4 5 0 10m2-11q4 6 0 12" fill="none" stroke="#bbb" />
      </svg>
      <div class="clock"><span>07:04 p.m.</span><span>10/12/2012</span></div>
      <div class="show-desktop"></div>
    </div>
  </div>
</template>

<style>
html, body { height: 100%; margin: 0; overflow: hidden; }
</style>
<style scoped>
.desktop { width: 1366px; height: 768px; display: flex; flex-direction: column; overflow: hidden; background: #f0f0f0; font-family: "Liberation Sans", Arial, sans-serif; }
.defs { position: absolute; }
svg { flex: none; display: block; }
.browser { height: 53px; flex: none; display: flex; align-items: flex-start; border-bottom: 1px solid #8d878b; box-shadow: 0 1px #151515; font-family: "Open Sans", "Noto Sans", sans-serif; background: radial-gradient(ellipse 190px 95px at 0 0, #6b6b6b 0, #505050 40%, transparent 100%), linear-gradient(115deg, #4a4a4a 0, #222 120px, #000 230px, #000 570px, #151515 640px, #151515 760px, #020202 860px, #000 1060px, #050505 1210px, #555 1320px, #666 100%); }
.nav-buttons { width: 71px; }
.address { box-sizing: border-box; width: 366px; height: 25px; margin-top: 26px; padding: 0 3px 0 4px; display: flex; align-items: center; border: 1px solid #4e4e4e; box-shadow: inset 0 0 0 1px #bdbdbd; background: linear-gradient(100deg, #aaa 0 62%, #969696 85%); }
.url { margin-left: 4px; color: #686868; font-size: 12px; letter-spacing: -.36px; white-space: nowrap; }
.url b { font-weight: 400; color: #000; }
.tools { margin-left: auto; }
.tab { box-sizing: border-box; width: 199px; height: 27px; margin: 26px 0 0 3px; display: flex; align-items: center; padding: 0 5px; border: 1px solid #555; border-bottom: 0; box-shadow: inset 1px 1px #eee; background: linear-gradient(#fafafa, #cfcfcf 45%, #acacac); font-size: 12px; letter-spacing: -.3px; }
.tab span { margin-left: 3px; }
.tab-x { margin-left: auto; }
.new-tab { width: 25px; height: 26px; margin-top: 26px; border: 1px solid #777; border-bottom: 0; background: linear-gradient(#8d8d8d, #4b4b4b); }
.window-side { margin-left: auto; width: 107px; padding-right: 1px; display: flex; flex-direction: column; }
.window-buttons { height: 17px; width: 103px; display: flex; border: 1px solid #aaa; border-top: 0; border-radius: 0 0 5px 5px; overflow: hidden; }
.window-buttons i { border-right: 1px solid #aaa; background: linear-gradient(#8c8c8c 0 45%, #3b3b3d 50%, #646467); }
.window-buttons .close { border: 0; background: linear-gradient(#d19181, #c35039 45%, #a61d0d 50%, #ce5336); }
.command-icons { margin: 12px 0 0 35px; }
.viewport { flex: 1; min-height: 0; display: flex; margin-top: 1px; border-top: 1px solid #fff; }
.gutter { width: 175px; flex: none; }
.page { width: 1001px; flex: none; background: #fff; }
.banner { height: 80px; margin-left: 1px; background: #4f81bc; }
.logo-text { font: 24px "Liberation Sans", sans-serif; fill: #075baf; stroke: #e9f3ff; stroke-width: 1.6; paint-order: stroke; filter: drop-shadow(1px 2px 2px #444a); }
.logo-slogan { font-size: 7.2px; fill: #fff; filter: drop-shadow(1px 1px 1px #444a); }
.menu { box-sizing: border-box; width: 1000px; height: 28px; margin-top: 12px; padding: 0 31px 1px 44px; display: flex; align-items: center; gap: 33px; background: #000; color: #fff; font-size: 16.15px; white-space: nowrap; }
.user { margin-left: auto; padding-top: 5px; font-size: 11px; }
.map { position: relative; width: 1000px; height: 450px; margin-top: 11px; overflow: hidden; }
.street { fill: #494542; stroke: #fff; stroke-opacity: .65; stroke-width: 2px; paint-order: stroke; }
.place { stroke: #fff; stroke-opacity: .7; stroke-width: 2px; paint-order: stroke; }
.arrow { fill: #929aa0; stroke: #929aa0; stroke-width: .9; opacity: .65; }
.google { font: 22px "Liberation Serif", serif; fill: #fff; stroke: #8b8576; stroke-width: 1.3; paint-order: stroke; filter: drop-shadow(0 1px 1px #7779); }
.controls { position: absolute; left: 15px; top: 13px; }
.map-type { box-sizing: border-box; position: absolute; left: 910px; top: 5px; width: 85px; height: 20px; padding: 0 6px 1px 5px; display: flex; align-items: center; justify-content: space-between; border: 1px solid #637281; box-shadow: 0 2px 3px #0006; background: #fff; font-size: 13px; }
.attribution { position: absolute; right: 0; bottom: 0; height: 19px; display: flex; align-items: center; color: #333; background: #ffffff40; white-space: nowrap; }
.attribution > span { font-size: 10px; letter-spacing: .03px; margin-right: 3px; }
.attribution b { box-sizing: border-box; width: 84px; height: 18px; text-align: center; border: 1px solid #ddd; background: #f4f4f4cc; font: bold 9px/16px "Liberation Sans", sans-serif; letter-spacing: -.25px; color: #222; }
.dialog { box-sizing: border-box; position: absolute; left: 270px; top: 100px; width: 432px; height: 342px; border: 1px solid #000; background: #4f81bc; color: #fff; font-weight: 700; font-size: 11px; }
.dialog-title { box-sizing: border-box; height: 30px; padding-top: 16px; text-align: center; background: #cdcdcd; font-size: 13.6px; line-height: 15px; }
.dialog-body { display: flex; flex-direction: column; gap: 17px; padding: 21px 0 0 21.5px; line-height: 14.7px; letter-spacing: .06px; }
.row { display: grid; grid-template-columns: 205px 1fr; }
.description { display: flex; flex-direction: column; margin-top: -1px; line-height: 15.2px; }
.indent { padding-left: 10px; }
button { align-self: center; width: 91px; height: 19px; margin: 4px 23px 0 0; padding: 0; border: 1px solid #4bb7d5; border-radius: 2px; box-shadow: inset 0 0 0 1px #9fe5f5; background: linear-gradient(#f5f5f5, #e5e5e5 50%, #cfcfcf); font: 13.3px/15px "Liberation Sans", sans-serif; color: #000; }
.dialog-close { position: absolute; right: -3px; top: -2px; }
.legend { width: 1000px; height: 80px; margin-top: 11px; display: grid; grid-template-columns: 195px 211px 207px 1fr; padding-left: 60px; box-sizing: border-box; background: #4f81bc; color: #fff; font-size: 20px; }
.item { display: flex; height: 70px; align-items: center; }
.fire { gap: 9.5px; } .gun { gap: 4px; } .crime { gap: 0; } .other { gap: 6px; }
.right-gutter { flex: 1; }
.scrollbar { width: 16px; flex: none; display: flex; flex-direction: column; background: linear-gradient(90deg, #e3e3e3, #f7f7f7 30%, #f4f4f4); }
.thumb { height: 524px; margin: 0 0 0 1px; width: 12px; display: flex; align-items: center; justify-content: center; border: 1px solid #919191; border-radius: 2px; background: linear-gradient(90deg, #f8f8f8, #e4e4e4 45%, #c6c6c6 60%, #d7d7d7); }
.thumb i { width: 7px; height: 8px; background: repeating-linear-gradient(#777 0 1px, #eee 1px 3px); }
.down { margin-top: auto; }
.taskbar { box-sizing: border-box; height: 40px; flex: none; display: flex; align-items: flex-start; padding-top: 1px; background: #050505; box-shadow: inset 0 1px #555; color: #fff; font: 12px "Open Sans", "Noto Sans", sans-serif; letter-spacing: -.3px; white-space: nowrap; }
.start { width: 60px; padding-left: 7px; box-sizing: border-box; }
.task { box-sizing: border-box; width: 112px; height: 38px; display: flex; align-items: center; gap: 2px; padding-left: 6px; border: 1px solid #6d6d6d; border-radius: 2px; background: radial-gradient(ellipse 95px 30px at 15% 0, #858585, transparent), linear-gradient(170deg, #656565, #383838 44%, #1d1d1d 48%, #131313); }
.chrome { width: 62px; padding: 5px 0 0 17px; box-sizing: border-box; }
.active { border-color: #bbb; background: linear-gradient(165deg, #ddd, #aaa 44%, #747474 48%, #777); }
.group { display: flex; margin: 0 4px; width: 340px; box-sizing: border-box; border: 1px solid #777; border-radius: 2px; }
.group .task { height: 36px; width: 113px; border: 0; }
.smsc { margin-left: 3px; } .imagenes { margin-left: 6px; } .disk { margin-left: 3px; } .page-title, .two { margin-left: 2px; }
.vs { margin-right: 4px; } .sql { margin-right: 4px; width: 111px; } .paint { width: 111px; }
.lang { width: 42px; margin: 9px 0 0 14px; box-sizing: border-box; }
.tray { margin: 10px 0 0 -14px; }
.clock { width: 84px; display: flex; flex-direction: column; align-items: center; line-height: 17px; padding-top: 3px; margin-left: 1px; }
.show-desktop { box-sizing: border-box; width: 13px; height: 38px; margin-left: auto; border: 1px solid #686868; background: linear-gradient(140deg, #555, #111 50%); }
</style>
